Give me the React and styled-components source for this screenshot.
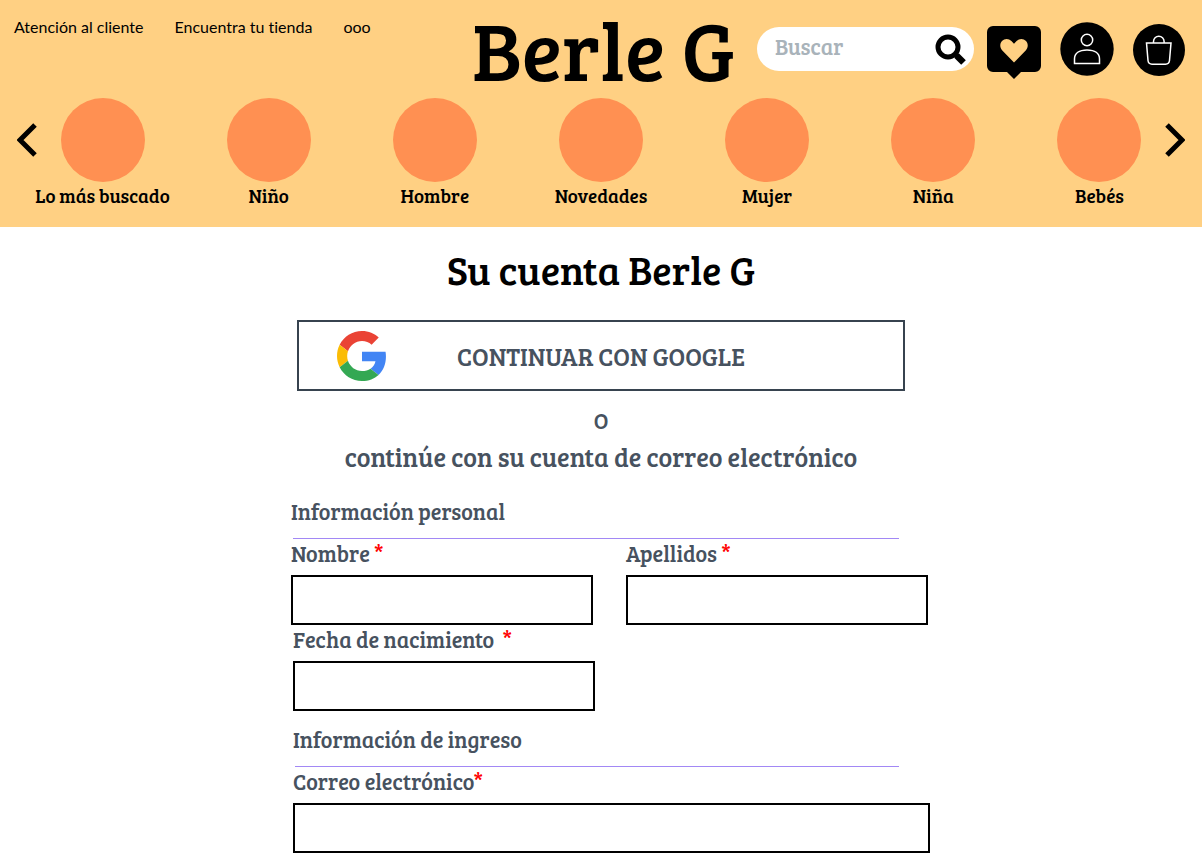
import React from "react";
import styled, { createGlobalStyle } from "styled-components";

const GlobalStyle = createGlobalStyle`
  * { box-sizing: border-box; }
  body {
    margin: 0;
    background: #fff;
    color: #000;
    font-family: "Bree Serif", "DejaVu Serif", serif;
  }
  button, input { font: inherit; color: inherit; }
  svg { display: block; }
`;

const Header = styled.header`
  background: #ffd083;
  padding-bottom: 17px;
`;

const TopBar = styled.div`
  display: flex;
  align-items: flex-start;
  height: 98px;
  padding: 0 17px 0 14px;
`;

const HelpNav = styled.nav`
  display: flex;
  flex: 1;
  gap: 31px;
  padding-top: 15px;
  font: 16px/24px Lato, sans-serif;
  font-variant-ligatures: none;
  a { color: inherit; text-decoration: none; white-space: nowrap; }
`;

const Logo = styled.a`
  color: inherit;
  text-decoration: none;
  white-space: nowrap;
  font-size: 83px;
  line-height: 96px;
  margin-right: 22px;
`;

const Actions = styled.div`
  display: flex;
  align-items: center;
  gap: 19px;
  padding-top: 19px;
`;

const Search = styled.form`
  display: flex;
  align-items: center;
  width: 217px;
  height: 44px;
  margin-right: -6px;
  padding: 0 8px 0 18px;
  border-radius: 22px;
  background: #fff;
`;

const SearchInput = styled.input`
  flex: 1;
  min-width: 0;
  padding: 0 0 6px;
  border: 0;
  outline: 0;
  background: none;
  font-size: 22px;
  line-height: 28px;
  &::placeholder { color: #a9b3ba; opacity: 1; }
`;

const IconButton = styled.button`
  flex: none;
  padding: 0;
  border: 0;
  background: none;
  cursor: pointer;
`;

const Carousel = styled.div`
  display: flex;
  align-items: flex-start;
  padding: 0 17px;
`;

const Arrow = styled(IconButton)`
  display: flex;
  align-items: center;
  width: 20px;
  height: 84px;
`;

const Categories = styled.ul`
  display: flex;
  flex: 1;
  justify-content: space-between;
  margin: 0;
  padding: 0;
  list-style: none;
`;

const Category = styled.a`
  display: flex;
  flex-direction: column;
  align-items: center;
  width: 131px;
  color: inherit;
  text-decoration: none;
  white-space: nowrap;
  font-size: 19px;
  line-height: 28px;
  &::before {
    content: "";
    width: 84px;
    height: 84px;
    border-radius: 50%;
    background: #ff9052;
  }
`;

const Main = styled.main`
  max-width: 658px;
  margin: 0 auto;
  padding-top: 15px;
  color: #47525f;
`;

const Title = styled.h1`
  margin: 0 0 24px;
  color: #000;
  font-size: 40px;
  font-weight: 400;
  line-height: 54px;
  text-align: center;
`;

const GoogleButton = styled.button`
  display: grid;
  grid-template-columns: 1fr auto 1fr;
  align-items: center;
  width: calc(100% - 50px);
  height: 71px;
  margin: 0 25px;
  padding: 0 38px;
  border: 2px solid #37434f;
  background: #fff;
  font-size: 25px;
  cursor: pointer;
`;

const Or = styled.p`
  margin: 14px 0 4px;
  font-size: 22px;
  line-height: 30px;
  text-align: center;
`;

const Lead = styled.p`
  margin: 0 0 21px;
  font-size: 26px;
  line-height: 36px;
  text-align: center;
`;

const Section = styled.section`
  margin-left: ${(p) => (p.$indent ? 21 : 19)}px;
`;

const SectionTitle = styled.h2`
  margin: 0;
  padding-top: ${(p) => (p.$spaced ? 13 : 0)}px;
  font-size: 22px;
  font-weight: 400;
  line-height: 30px;
`;

const Divider = styled.hr`
  height: 1px;
  margin: 12px 31px 0 2px;
  border: 0;
  background: #a288f5;
`;

const Row = styled.div`
  display: grid;
  grid-template-columns: ${(p) => (p.$single ? "1fr" : "1fr 1fr")};
  column-gap: 33px;
  padding-right: ${(p) => (p.$wide ? 2 : 0)}px;
`;

const Label = styled.label`
  display: block;
  height: 36px;
  font-size: 22px;
  line-height: 29px;
`;

const Required = styled.span`
  margin-left: ${(p) => p.$gap || 0}px;
  color: #f00;
`;

const TextInput = styled.input`
  display: block;
  width: 100%;
  height: 50px;
  padding: 0 12px;
  border: 2px solid #000;
  border-radius: 0;
  background: #fff;
  font-size: 22px;
`;

function Field({ id, label, gap, type = "text" }) {
  return (
    <div>
      <Label htmlFor={id}>
        {label}
        <Required $gap={gap}>*</Required>
      </Label>
      <TextInput id={id} type={type} required />
    </div>
  );
}

const categories = ["Lo más buscado", "Niño", "Hombre", "Novedades", "Mujer", "Niña", "Bebés"];

const Chevron = ({ points }) => (
  <svg width="20" height="34" viewBox="0 0 20 34" fill="none" stroke="#000" strokeWidth="5">
    <polyline points={points} />
  </svg>
);

const SearchIcon = () => (
  <svg width="31" height="31" viewBox="0 0 31 31" fill="none" stroke="#000">
    <circle cx="13" cy="13" r="10" strokeWidth="5" />
    <path d="M19 19l5 5" strokeWidth="4" />
    <path d="M21.500 21.500l7 7" strokeWidth="6.500" />
  </svg>
);

const FavouritesIcon = () => (
  <svg width="54" height="60" viewBox="0 -6 54 60">
    <path d="M6 1h42a6 6 0 0 1 6 6v34a6 6 0 0 1-6 6H34l-7 7-7-7H6a6 6 0 0 1-6-6V7a6 6 0 0 1 6-6z" />
    <path
      d="M27 37.500L15.300 25.600c-2.700-3-2.600-6.900-.3-9.500 2.600-2.700 6.700-2.700 9.400 0L27 18.800l2.600-2.700c2.700-2.700 6.800-2.700 9.400 0 2.300 2.600 2.400 6.500-.3 9.500z"
      fill="#ffd083"
    />
  </svg>
);

const AccountIcon = () => (
  <svg width="54" height="54" viewBox="0 0 54 54" fill="none" stroke="#fff" strokeWidth="1.500">
    <circle cx="27" cy="27" r="26.700" fill="#000" stroke="none" />
    <circle cx="27" cy="18" r="5.700" />
    <path d="M14.500 41.500V37c0-5.500 4.500-9 12.500-9s12.500 3.500 12.500 9v4.500z" />
  </svg>
);

const BagIcon = () => (
  <svg width="52" height="54" viewBox="0 -2 52 54" fill="none" stroke="#fff" strokeWidth="1.500">
    <circle cx="26" cy="26" r="26" fill="#000" stroke="none" />
    <path d="M13.500 19h24.500l-1.500 17.500q-.4 3.700-4 3.700H19q-3.600 0-4-3.700z" />
    <path d="M20.500 19v-1.500a5.300 5.300 0 0 1 10.600 0V19" />
  </svg>
);

const GoogleIcon = () => (
  <svg width="50" height="50" viewBox="0 0 48 48">
    <path fill="#EA4335" d="M24 9.500c3.540 0 6.710 1.220 9.210 3.600l6.850-6.850C35.900 2.380 30.470 0 24 0 14.620 0 6.510 5.380 2.560 13.220l7.980 6.190C12.430 13.720 17.740 9.500 24 9.500z" />
    <path fill="#4285F4" d="M46.980 24.550c0-1.570-.15-3.090-.38-4.550H24v9.020h12.940c-.58 2.960-2.260 5.480-4.780 7.180l7.730 6c4.510-4.180 7.090-10.360 7.090-17.650z" />
    <path fill="#FBBC05" d="M10.530 28.590c-.48-1.450-.76-2.990-.76-4.590s.27-3.140.76-4.590l-7.980-6.190C.92 16.460 0 20.120 0 24c0 3.880.92 7.540 2.560 10.780l7.970-6.190z" />
    <path fill="#34A853" d="M24 48c6.480 0 11.930-2.130 15.890-5.810l-7.730-6c-2.150 1.450-4.920 2.300-8.160 2.300-6.260 0-11.570-4.220-13.470-9.910l-7.980 6.190C6.510 42.620 14.620 48 24 48z" />
  </svg>
);

export default function App() {
  return (
    <>
      <GlobalStyle />
      <Header>
        <TopBar>
          <HelpNav>
            <a href="#atencion">Atención al cliente</a>
            <a href="#tiendas">Encuentra tu tienda</a>
            <a href="#mas">ooo</a>
          </HelpNav>
          <Logo href="#inicio">Berle G</Logo>
          <Actions>
            <Search role="search">
              <SearchInput type="text" placeholder="Buscar" aria-label="Buscar" />
              <IconButton type="submit" aria-label="Buscar"><SearchIcon /></IconButton>
            </Search>
            <IconButton type="button" aria-label="Favoritos"><FavouritesIcon /></IconButton>
            <IconButton type="button" aria-label="Mi cuenta"><AccountIcon /></IconButton>
            <IconButton type="button" aria-label="Bolsa"><BagIcon /></IconButton>
          </Actions>
        </TopBar>
        <Carousel>
          <Arrow type="button" aria-label="Anterior"><Chevron points="18,2 3,17 18,32" /></Arrow>
          <Categories>
            {categories.map((name) => (
              <li key={name}><Category href="#categoria">{name}</Category></li>
            ))}
          </Categories>
          <Arrow type="button" aria-label="Siguiente"><Chevron points="2,2 17,17 2,32" /></Arrow>
        </Carousel>
      </Header>
      <Main>
        <Title>Su cuenta Berle G</Title>
        <GoogleButton type="button">
          <GoogleIcon />
          <span>CONTINUAR CON GOOGLE</span>
        </GoogleButton>
        <Or>O</Or>
        <Lead>continúe con su cuenta de correo electrónico</Lead>
        <form>
          <Section>
            <SectionTitle>Información personal</SectionTitle>
            <Divider />
            <Row $wide>
              <Field id="nombre" label="Nombre" gap={4} />
              <Field id="apellidos" label="Apellidos" gap={4} />
            </Row>
          </Section>
          <Section $indent>
            <Row>
              <Field id="nacimiento" label="Fecha de nacimiento" gap={8} />
            </Row>
            <SectionTitle $spaced>Información de ingreso</SectionTitle>
            <Divider />
            <Row $single>
              <Field id="correo" label="Correo electrónico" type="email" />
            </Row>
          </Section>
        </form>
      </Main>
    </>
  );
}
